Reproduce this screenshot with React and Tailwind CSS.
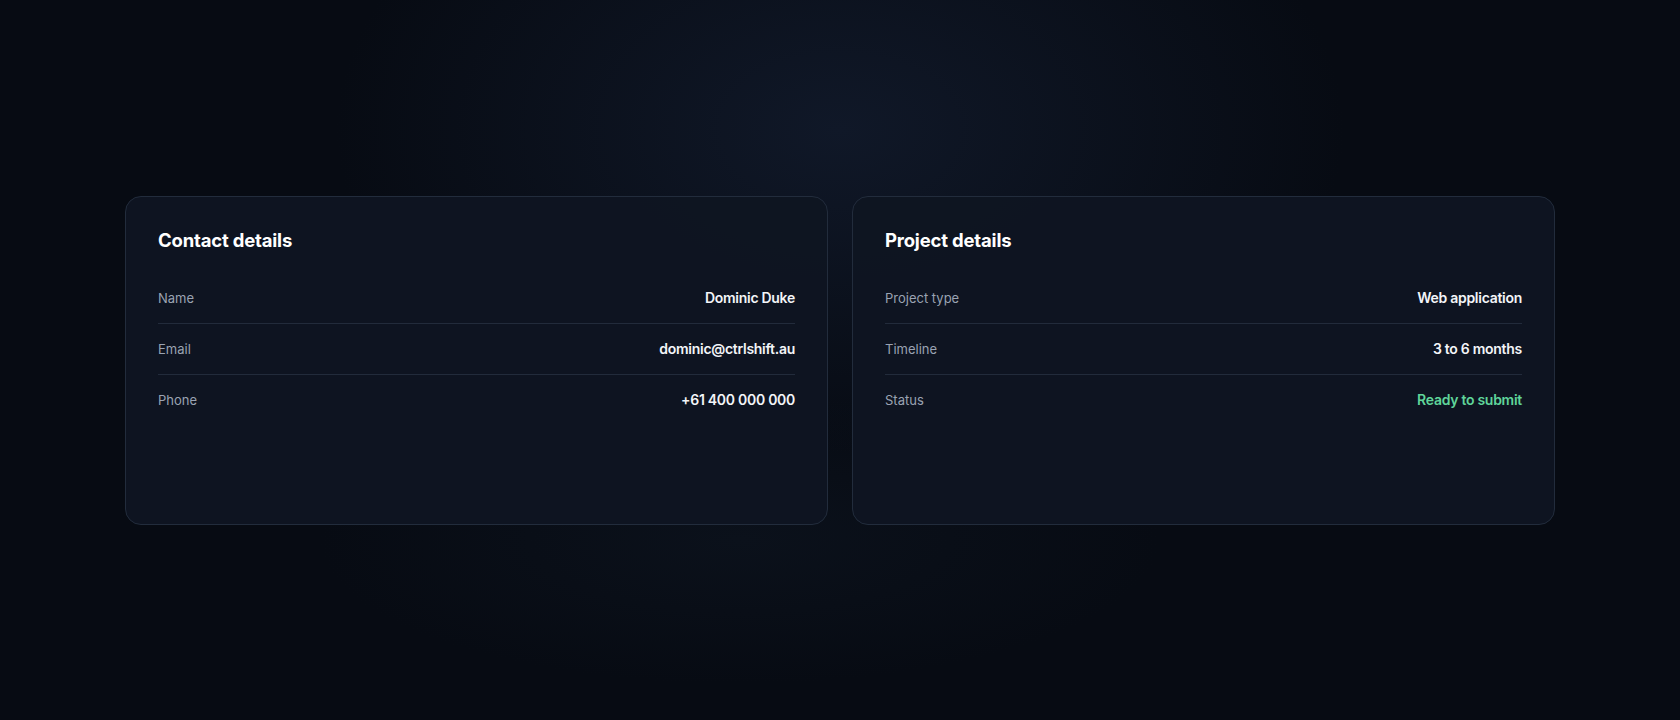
import React from 'react';

const contact = [
  { label: 'Name', value: 'Dominic Duke' },
  { label: 'Email', value: 'dominic@ctrlshift.au' },
  { label: 'Phone', value: '+61 400 000 000' },
];

const project = [
  { label: 'Project type', value: 'Web application' },
  { label: 'Timeline', value: '3 to 6 months' },
  { label: 'Status', value: 'Ready to submit', accent: true },
];

const DetailCard = ({ title, rows }) => (
  <div className="min-h-[329px] rounded-2xl border border-[#222c3c] bg-[#0f1522]/95 p-8">
    <h2 className="text-[18.5px] leading-[22px] font-bold text-white tracking-[-0.01em]">{title}</h2>
    <dl className="mt-[22px]">
      {rows.map((row, i) => (
        <div
          key={row.label}
          className={`flex items-center justify-between py-[15px] leading-5 ${
            i < rows.length - 1 ? 'border-b border-[#222b3b]' : ''
          }`}
        >
          <dt className="text-[13px] text-[#9aa3b2]">{row.label}</dt>
          <dd
            className={`text-sm font-semibold tracking-[-0.02em] ${
              row.accent ? 'text-[#5fd59a]' : 'text-[#f3f5f8]'
            }`}
          >
            {row.value}
          </dd>
        </div>
      ))}
    </dl>
  </div>
);

export default function App() {
  return (
    <div
      className="min-h-screen flex items-center bg-[#070b13] bg-[radial-gradient(ellipse_30%_45%_at_50%_18%,#101828_0%,rgba(7,11,19,0)_100%),radial-gradient(ellipse_25%_20%_at_44%_75%,#0b111b_0%,rgba(7,11,19,0)_100%)] font-['Inter',sans-serif]"
    >
      <div className="mx-auto w-full max-w-[1430px] grid grid-cols-2 gap-6">
        <DetailCard title="Contact details" rows={contact} />
        <DetailCard title="Project details" rows={project} />
      </div>
    </div>
  );
}
